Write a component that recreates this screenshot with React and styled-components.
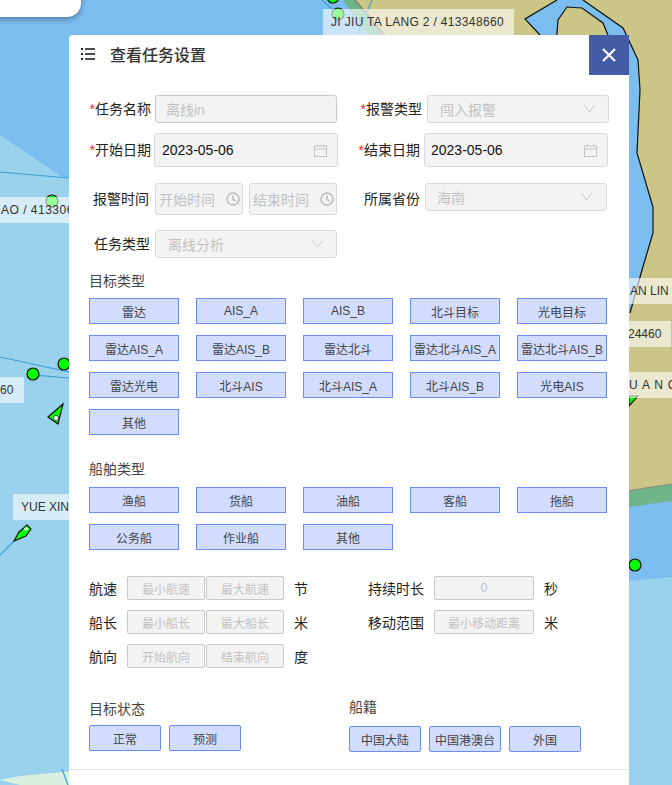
import React from 'react'
import styled, { createGlobalStyle } from 'styled-components'

const targetTypes = ['雷达', 'AIS_A', 'AIS_B', '北斗目标', '光电目标', '雷达AIS_A', '雷达AIS_B', '雷达北斗', '雷达北斗AIS_A', '雷达北斗AIS_B', '雷达光电', '北斗AIS', '北斗AIS_A', '北斗AIS_B', '光电AIS', '其他']
const shipTypes = ['渔船', '货船', '油船', '客船', '拖船', '公务船', '作业船', '其他']

const mapLabels = [
    { text: 'JI JIU TA LANG 2 / 413348660', x: 323, y: 9, w: 191, pad: 8, spacing: 0.33 },
    { text: 'AO / 413306', x: 0, y: 197, w: 69, pad: 1, spacing: 0.5 },
    { text: '60', x: 0, y: 377, w: 24, pad: 0, spacing: 0 },
    { text: 'YUE XIN', x: 13, y: 494, w: 56, pad: 8, spacing: 0 },
    { text: 'AN LIN', x: 629, y: 278, w: 43, pad: 1, spacing: 0 },
    { text: '24460', x: 628, y: 321, w: 43, pad: 0, spacing: 0 },
    { text: 'U A N C', x: 629, y: 372, w: 43, pad: 0, spacing: 0.8 },
]

function SeaChart() {
    return (
        <ChartSvg viewBox="0 0 672 785">
            <rect width="672" height="785" fill="#7cbdef" />
            <polygon points="0,135 62,177 200,177 200,785 0,785" fill="#9ad1ec" />
            <polygon points="20,785 0,780 20,776 115,767 205,769 205,785" fill="#d8f0df" />
            <polygon points="600,584 629,581 672,577 672,785 600,785" fill="#9ad1ec" />
            <polygon points="355,0 672,0 672,484 629,491 500,500 500,60 400,60" fill="#cbc685" />
            <polygon points="343,0 355,0 400,52 380,52" fill="#6fb58c" />
            <line x1="355" y1="0" x2="392" y2="44" stroke="#8c8c7c" strokeWidth="2" />
            <polygon points="600,495 629,491 672,484 672,501 629,507 600,512" fill="#6fb58c" />
            <line x1="600" y1="495" x2="672" y2="484" stroke="#7f8a78" strokeWidth="1" />
            <polygon points="525,19 557,0 583,0 623,28 638,60 640,90 637,153 653,207 653,233 642,270 630,313 600,313 600,60 550,45" fill="#7cbdef" />
            <polyline points="540,35 525,19 557,0" fill="none" stroke="#111" strokeWidth="1.2" />
            <polyline points="583,0 623,28 638,60 640,90 637,153 653,207 653,233 642,270 630,313" fill="none" stroke="#111" strokeWidth="1.2" />
            <polygon points="556,45 558,20 567,7 582,8 603,23 612,45" fill="#cbc685" stroke="#111" strokeWidth="1.2" />
            <g stroke="#3b9fd6" strokeWidth="1.2" fill="none">
                <line x1="0" y1="172" x2="69" y2="178" />
                <line x1="0" y1="357" x2="69" y2="372" />
                <line x1="33" y1="375" x2="69" y2="378" />
                <line x1="14" y1="541" x2="0" y2="555" />
                <line x1="62" y1="769" x2="68" y2="785" />
                <line x1="322" y1="0" x2="333" y2="10" />
                <line x1="372" y1="0" x2="357" y2="35" />
            </g>
            <g fill="#0f0" stroke="#111" strokeWidth="1.2">
                <circle cx="52" cy="201" r="6" />
                <circle cx="64" cy="364" r="6" />
                <circle cx="33" cy="374" r="6" />
                <circle cx="635" cy="565" r="6" />
                <circle cx="333" cy="-3" r="6" />
                <circle cx="338" cy="14" r="6" />
                <polygon points="63,404 48,417 58,424" />
                <path d="M14,541 L19,532 L27,525 L31,529 L26,536 Z" />
                <polygon points="629,396 638,396 629,406" />
            </g>
            <circle cx="56" cy="418" r="2.6" fill="#fff" stroke="#111" strokeWidth="0.7" />
            <circle cx="26" cy="529" r="1.8" fill="#fff" />
        </ChartSvg>
    )
}

function ListIcon() {
    return (
        <svg width="14" height="12" viewBox="0 0 14 12">
            <g fill="#222">
                <rect x="0" y="0" width="2" height="2" />
                <rect x="0" y="5" width="2" height="2" />
                <rect x="0" y="10" width="2" height="2" />
                <rect x="4" y="0.2" width="10" height="1.6" />
                <rect x="4" y="5.2" width="10" height="1.6" />
                <rect x="4" y="10.2" width="10" height="1.6" />
            </g>
        </svg>
    )
}

function CloseIcon() {
    return (
        <svg width="14" height="14" viewBox="0 0 14 14">
            <path d="M1 1 L13 13 M13 1 L1 13" stroke="#fff" strokeWidth="2.2" fill="none" />
        </svg>
    )
}

function CalendarIcon() {
    return (
        <svg width="13" height="13" viewBox="0 0 13 13" fill="none" stroke="#c4c4c4">
            <rect x="0.5" y="2" width="12" height="10.5" />
            <path d="M0.5 5 H12.5 M3.5 0 V2 M9.5 0 V2" />
        </svg>
    )
}

function ClockIcon() {
    return (
        <svg width="14" height="14" viewBox="0 0 14 14" fill="none" stroke="#bdbdbd" strokeWidth="1.5">
            <circle cx="7" cy="7" r="6" />
            <path d="M7 3.5 V7.5 L9.5 9" />
        </svg>
    )
}

function ChevronIcon() {
    return (
        <svg width="11" height="8" viewBox="0 0 11 8" fill="none" stroke="#c6c6c6">
            <path d="M0.5 0.5 L5.5 7 L10.5 0.5" />
        </svg>
    )
}

function Field({ label, required, labelWidth, labelDrop, gap, children }) {
    return (
        <FieldWrap>
            <FieldLabel $w={labelWidth} $drop={labelDrop}>
                {required && <Star>*</Star>}
                {label}
            </FieldLabel>
            <FieldBody $gap={gap}>{children}</FieldBody>
        </FieldWrap>
    )
}

function RangeInputs({ values }) {
    return values.map(v => <SmallInput key={v} $w={78}>{v}</SmallInput>)
}

export default function App() {
    return (
        <Screen>
            <GlobalStyle />
            <SeaChart />
            <TopCard />
            {mapLabels.map(l => (
                <MapLabel key={l.text} $x={l.x} $y={l.y} $w={l.w} $pad={l.pad} $spacing={l.spacing}>{l.text}</MapLabel>
            ))}
            <Panel>
                <PanelHeader>
                    <ListIcon />
                    <PanelTitle>查看任务设置</PanelTitle>
                    <CloseButton><CloseIcon /></CloseButton>
                </PanelHeader>
                <PanelBody>
                    <FormRow>
                        <Left>
                            <Field label="任务名称" required labelWidth={62} gap={4}>
                                <Control $w={182} $h={28} $pl={10} $dark>离线in</Control>
                            </Field>
                        </Left>
                        <Field label="报警类型" required labelWidth={73} gap={5}>
                            <Control $w={182} $h={28} $pl={12} $pr={13}>闯入报警<ChevronIcon /></Control>
                        </Field>
                    </FormRow>
                    <FormRow $top={10}>
                        <Left>
                            <Field label="开始日期" required labelWidth={62} gap={3}>
                                <Control $w={184} $h={34} $pl={7} $pr={10} $value>2023-05-06<CalendarIcon /></Control>
                            </Field>
                        </Left>
                        <Field label="结束日期" required labelWidth={71} gap={4}>
                            <Control $w={184} $h={34} $pl={6} $pr={10} $value>2023-05-06<CalendarIcon /></Control>
                        </Field>
                    </FormRow>
                    <FormRow $top={16}>
                        <Left>
                            <Field label="报警时间" labelWidth={60} gap={6}>
                                <TimePair>
                                    <Control $w={88} $h={32} $pl={3} $pr={2}>开始时间<ClockIcon /></Control>
                                    <Control $w={88} $h={32} $pl={3} $pr={2}>结束时间<ClockIcon /></Control>
                                </TimePair>
                            </Field>
                        </Left>
                        <Field label="所属省份" labelWidth={71} labelDrop={4} gap={5}>
                            <Control $w={182} $h={28} $pl={11} $pr={14}>海南<ChevronIcon /></Control>
                        </Field>
                    </FormRow>
                    <FormRow $top={15}>
                        <Field label="任务类型" labelWidth={61} gap={5}>
                            <Control $w={182} $h={28} $pl={12} $pr={13}>离线分析<ChevronIcon /></Control>
                        </Field>
                    </FormRow>

                    <SectionLabel $top={13}>目标类型</SectionLabel>
                    <TypeGrid $top={7}>
                        {targetTypes.map(t => <TypeButton key={t}>{t}</TypeButton>)}
                    </TypeGrid>

                    <SectionLabel $top={24}>船舶类型</SectionLabel>
                    <TypeGrid $top={8}>
                        {shipTypes.map(t => <TypeButton key={t}>{t}</TypeButton>)}
                    </TypeGrid>

                    <RangeBlock>
                        <RangeRow>
                            <RangeLeft>
                                <RangeLabel>航速</RangeLabel>
                                <Joined><RangeInputs values={['最小航速', '最大航速']} /></Joined>
                                <Unit>节</Unit>
                            </RangeLeft>
                            <RangeLabel $w={66}>持续时长</RangeLabel>
                            <SmallInput $w={100}>0</SmallInput>
                            <Unit>秒</Unit>
                        </RangeRow>
                        <RangeRow>
                            <RangeLeft>
                                <RangeLabel>船长</RangeLabel>
                                <Joined><RangeInputs values={['最小船长', '最大船长']} /></Joined>
                                <Unit>米</Unit>
                            </RangeLeft>
                            <RangeLabel $w={66}>移动范围</RangeLabel>
                            <SmallInput $w={100}>最小移动距离</SmallInput>
                            <Unit>米</Unit>
                        </RangeRow>
                        <RangeRow>
                            <RangeLeft>
                                <RangeLabel>航向</RangeLabel>
                                <Joined><RangeInputs values={['开始航向', '结束航向']} /></Joined>
                                <Unit>度</Unit>
                            </RangeLeft>
                        </RangeRow>
                    </RangeBlock>

                    <StatusRow>
                        <StatusLeft>
                            <StatusLabel $top={2} $bottom={6}>目标状态</StatusLabel>
                            <ChipRow>
                                <Chip>正常</Chip>
                                <Chip>预测</Chip>
                            </ChipRow>
                        </StatusLeft>
                        <div>
                            <StatusLabel $top={0} $bottom={9}>船籍</StatusLabel>
                            <ChipRow>
                                <Chip>中国大陆</Chip>
                                <Chip>中国港澳台</Chip>
                                <Chip>外国</Chip>
                            </ChipRow>
                        </div>
                    </StatusRow>
                </PanelBody>
                <PanelFooter />
            </Panel>
        </Screen>
    )
}

const GlobalStyle = createGlobalStyle`
    html, body {
        margin: 0;
        padding: 0;
        overflow: hidden;
    }
    body {
        font-family: "Liberation Sans", "Noto Sans CJK SC", sans-serif;
    }
`

const Screen = styled.div`
    position: relative;
    width: 672px;
    height: 785px;
    overflow: hidden;
`

const ChartSvg = styled.svg`
    position: absolute;
    left: 0;
    top: 0;
    width: 672px;
    height: 785px;
`

const TopCard = styled.div`
    position: absolute;
    left: -20px;
    top: -20px;
    width: 101px;
    height: 37px;
    background: #fff;
    border-radius: 0 0 14px 0;
    box-shadow: 0 2px 6px rgba(0, 0, 0, .35);
`

const MapLabel = styled.div`
    position: absolute;
    left: ${props => props.$x}px;
    top: ${props => props.$y}px;
    width: ${props => props.$w}px;
    height: 26px;
    box-sizing: border-box;
    padding-left: ${props => props.$pad}px;
    background: rgba(255, 255, 255, .6);
    color: #333;
    font-size: 12px;
    letter-spacing: ${props => props.$spacing}px;
    line-height: 26px;
    white-space: nowrap;
    overflow: hidden;
`

const Panel = styled.div`
    position: absolute;
    left: 69px;
    top: 35px;
    width: 560px;
    height: 750px;
    background: #fff;
    border-radius: 4px 0 0 0;
`

const PanelHeader = styled.div`
    position: relative;
    display: flex;
    align-items: center;
    box-sizing: border-box;
    height: 40px;
    padding: 0 0 2px 12px;
`

const PanelTitle = styled.div`
    margin-left: 15px;
    font-size: 16px;
    font-weight: 500;
    color: #333;
`

const CloseButton = styled.div`
    position: absolute;
    right: 0;
    top: 0;
    width: 40px;
    height: 40px;
    display: flex;
    align-items: center;
    justify-content: center;
    background: #445ba6;
`

const PanelBody = styled.div`
    padding: 20px 20px 0;
`

const FormRow = styled.div`
    display: flex;
    align-items: flex-start;
    margin-top: ${props => props.$top || 0}px;
`

const Left = styled.div`
    width: 260px;
    flex: none;
`

const FieldWrap = styled.div`
    display: flex;
    align-items: center;
`

const FieldLabel = styled.div`
    width: ${props => props.$w}px;
    flex: none;
    box-sizing: content-box;
    padding-top: ${props => props.$drop || 0}px;
    text-align: right;
    font-size: 14px;
    line-height: 20px;
    color: #222;
    white-space: nowrap;
`

const Star = styled.span`
    color: #f5222d;
`

const FieldBody = styled.div`
    margin-left: ${props => props.$gap}px;
`

const Control = styled.div`
    width: ${props => props.$w}px;
    height: ${props => props.$h}px;
    box-sizing: border-box;
    display: flex;
    align-items: center;
    justify-content: space-between;
    padding: 0 ${props => props.$pr || 0}px 0 ${props => props.$pl || 0}px;
    background: #f3f3f3;
    border: 1px solid ${props => props.$dark ? '#c9c9c9' : '#d9d9d9'};
    border-radius: 3px;
    font-size: 14px;
    color: ${props => props.$value ? '#111' : '#c2c2c2'};
    white-space: nowrap;
`

const TimePair = styled.div`
    display: flex;
    gap: 6px;
`

const SectionLabel = styled.div`
    margin-top: ${props => props.$top}px;
    height: 20px;
    font-size: 14px;
    line-height: 20px;
    color: #444;
`

const TypeGrid = styled.div`
    display: grid;
    grid-template-columns: repeat(5, 90px);
    column-gap: 17px;
    row-gap: 11px;
    margin-top: ${props => props.$top}px;
`

const TypeButton = styled.div`
    height: 26px;
    box-sizing: border-box;
    display: flex;
    align-items: center;
    justify-content: center;
    background: #d1dcff;
    border: 1px solid #6c8cf5;
    font-size: 12px;
    color: #444;
    white-space: nowrap;
`

const RangeBlock = styled.div`
    display: flex;
    flex-direction: column;
    gap: 10px;
    margin-top: 26px;
`

const RangeRow = styled.div`
    display: flex;
    align-items: center;
    height: 24px;
`

const RangeLeft = styled.div`
    display: flex;
    align-items: center;
    width: 279px;
    flex: none;
`

const RangeLabel = styled.div`
    width: ${props => props.$w || 38}px;
    flex: none;
    font-size: 14px;
    color: #222;
    white-space: nowrap;
`

const Joined = styled.div`
    display: flex;
    gap: 1px;
`

const SmallInput = styled.div`
    width: ${props => props.$w}px;
    height: 24px;
    box-sizing: border-box;
    display: flex;
    align-items: center;
    justify-content: center;
    background: #f3f3f3;
    border: 1px solid #c8c8c8;
    border-radius: 2px;
    font-size: 12px;
    color: #c2c2c2;
    white-space: nowrap;
`

const Unit = styled.div`
    margin-left: 10px;
    font-size: 14px;
    color: #222;
`

const StatusRow = styled.div`
    display: flex;
    margin-top: 29px;
`

const StatusLeft = styled.div`
    width: 260px;
    flex: none;
`

const StatusLabel = styled.div`
    margin-top: ${props => props.$top}px;
    margin-bottom: ${props => props.$bottom}px;
    height: 20px;
    font-size: 14px;
    line-height: 20px;
    color: #444;
`

const ChipRow = styled.div`
    display: flex;
    gap: 8px;
`

const Chip = styled.div`
    width: 72px;
    height: 26px;
    box-sizing: border-box;
    display: flex;
    align-items: center;
    justify-content: center;
    background: #d1dcff;
    border: 1px solid #6c8cf5;
    border-radius: 2px;
    font-size: 12px;
    color: #444;
    white-space: nowrap;
`

const PanelFooter = styled.div`
    margin-top: 17px;
    border-top: 1px solid #e5e5e5;
`
